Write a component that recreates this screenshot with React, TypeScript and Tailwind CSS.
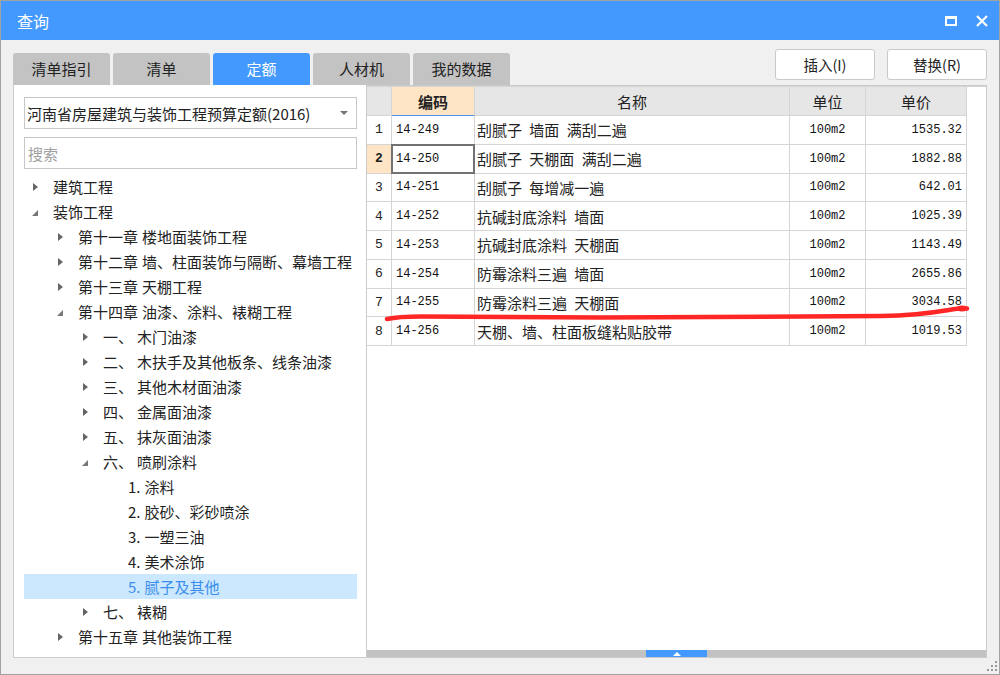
import React from "react"

type Node = { lv: number; arrow?: "r" | "d"; a: string; b?: string; sel?: boolean }

const tree: Node[] = [
  { lv: 0, arrow: "r", a: "建筑工程" },
  { lv: 0, arrow: "d", a: "装饰工程" },
  { lv: 1, arrow: "r", a: "第十一章", b: "楼地面装饰工程" },
  { lv: 1, arrow: "r", a: "第十二章", b: "墙、柱面装饰与隔断、幕墙工程" },
  { lv: 1, arrow: "r", a: "第十三章", b: "天棚工程" },
  { lv: 1, arrow: "d", a: "第十四章", b: "油漆、涂料、裱糊工程" },
  { lv: 2, arrow: "r", a: "一、", b: "木门油漆" },
  { lv: 2, arrow: "r", a: "二、", b: "木扶手及其他板条、线条油漆" },
  { lv: 2, arrow: "r", a: "三、", b: "其他木材面油漆" },
  { lv: 2, arrow: "r", a: "四、", b: "金属面油漆" },
  { lv: 2, arrow: "r", a: "五、", b: "抹灰面油漆" },
  { lv: 2, arrow: "d", a: "六、", b: "喷刷涂料" },
  { lv: 3, a: "1.", b: "涂料" },
  { lv: 3, a: "2.", b: "胶砂、彩砂喷涂" },
  { lv: 3, a: "3.", b: "一塑三油" },
  { lv: 3, a: "4.", b: "美术涂饰" },
  { lv: 3, a: "5.", b: "腻子及其他", sel: true },
  { lv: 2, arrow: "r", a: "七、", b: "裱糊" },
  { lv: 1, arrow: "r", a: "第十五章", b: "其他装饰工程" },
]

const rows = [
  ["14-249", "刮腻子 墙面 满刮二遍", "1535.32"],
  ["14-250", "刮腻子 天棚面 满刮二遍", "1882.88"],
  ["14-251", "刮腻子 每增减一遍", "642.01"],
  ["14-252", "抗碱封底涂料 墙面", "1025.39"],
  ["14-253", "抗碱封底涂料 天棚面", "1143.49"],
  ["14-254", "防霉涂料三遍 墙面", "2655.86"],
  ["14-255", "防霉涂料三遍 天棚面", "3034.58"],
  ["14-256", "天棚、墙、柱面板缝粘贴胶带", "1019.53"],
]

const tabs = ["清单指引", "清单", "定额", "人材机", "我的数据"]

const indent = ["pl-[4px]", "pl-[29px]", "pl-[54px]", "pl-[79px]"]

function Arrow({ kind }: { kind?: "r" | "d" }) {
  if (kind === "r")
    return <span className="block w-0 h-0 border-y-[4px] border-y-transparent border-l-[5px] border-l-[#666]" />
  if (kind === "d")
    return (
      <svg width="6" height="6" viewBox="0 0 6 6" className="mt-[2px]">
        <polygon points="6,0 6,6 0,6" fill="#777" />
      </svg>
    )
  return null
}

function TreeRow({ n }: { n: Node }) {
  return (
    <div
      className={`h-[25px] flex items-center leading-none text-[15px] ${indent[n.lv]} ${
        n.sel ? "bg-[#cce8ff] text-[#3b8eea]" : "text-[#222]"
      }`}
    >
      <span className="w-[14px] flex justify-center items-center">
        <Arrow kind={n.arrow} />
      </span>
      <span className="ml-[11px]">{n.a}</span>
      {n.b && <span className="ml-[4px]">{n.b}</span>}
    </div>
  )
}

const cell = "border-r border-b border-[#d5d5d5] flex items-center leading-none"

export default function App() {
  return (
    <div className="relative w-[1000px] h-[675px] overflow-hidden bg-[#f0f0f0] border border-[#a3a3a3] flex flex-col font-['Noto_Sans_CJK_SC','Microsoft_YaHei',sans-serif] text-[#222]">
      {/* title bar */}
      <div className="h-[39px] shrink-0 bg-[#4499ff] flex items-center pl-[16px] pr-[11px] text-white text-[16px]">
        <span>查询</span>
        <div className="ml-auto flex items-center gap-[19px]">
          <span className="block w-[12px] h-[10px] border-x-[2px] border-b-[2px] border-t-[3px] border-white" />
          <svg width="12" height="12" viewBox="0 0 12 12">
            <path d="M1 1 L11 11 M11 1 L1 11" stroke="#fff" strokeWidth="2.2" />
          </svg>
        </div>
      </div>

      <div className="flex-1 flex flex-col px-[12px]">
        {/* tabs and buttons */}
        <div className="h-[45px] shrink-0 flex justify-between">
          <div className="self-end flex gap-[3px]">
            {tabs.map((t) => (
              <div
                key={t}
                className={`w-[97px] h-[32px] rounded-t-[3px] flex items-center justify-center text-[15px] ${
                  t === "定额" ? "bg-[#4499ff] text-white" : "bg-[#c3c3c3] text-[#222]"
                }`}
              >
                {t}
              </div>
            ))}
          </div>
          <div className="mt-[9px] flex gap-[12px]">
            <button className="w-[100px] h-[31px] bg-white border border-[#c9c9c9] rounded-[3px] text-[14.5px] text-[#222]">
              插入(I)
            </button>
            <button className="w-[100px] h-[31px] bg-white border border-[#c9c9c9] rounded-[3px] text-[14.5px] text-[#222]">
              替换(R)
            </button>
          </div>
        </div>

        {/* main */}
        <div className="h-[573px] shrink-0 flex">
          <div className="w-[353px] bg-white border-l border-b border-[#cbcbcb] pl-[10px] pr-[9px] pt-[12px] flex flex-col">
            <div className="h-[32px] border border-[#c7c7c7] flex items-center pl-[2px] pr-[8px] text-[15px] leading-none">
              <span>河南省房屋建筑与装饰工程预算定额(2016)</span>
              <span className="ml-auto block w-0 h-0 border-x-[4px] border-x-transparent border-t-[4px] border-t-[#777]" />
            </div>
            <div className="mt-[8px] h-[32px] border border-[#c7c7c7] flex items-center pl-[3px] text-[15px] leading-none text-[#a0a0a0]">
              搜索
            </div>
            <div className="mt-[5px]">
              {tree.map((n, i) => (
                <TreeRow key={i} n={n} />
              ))}
            </div>
          </div>

          <div className="flex-1 bg-white border border-[#cbcbcb] flex flex-col">
            <div className="grid grid-cols-[25px_83px_315px_76px_101px] border-t border-[#d5d5d5] text-[15px]">
              <div className={`${cell} h-[29px] bg-[#e6e6e6]`} />
              <div className={`${cell} h-[29px] bg-[#fde5c6] border-b-[#4a94f0] justify-center font-bold`}>编码</div>
              <div className={`${cell} h-[29px] bg-[#e6e6e6] justify-center`}>名称</div>
              <div className={`${cell} h-[29px] bg-[#e6e6e6] justify-center`}>单位</div>
              <div className={`${cell} h-[29px] bg-[#e6e6e6] justify-center`}>单价</div>
              {rows.map((r, i) => {
                const sel = i === 1
                return (
                  <React.Fragment key={r[0]}>
                    <div
                      className={`${cell} h-[28.75px] justify-center font-['Liberation_Mono',monospace] text-[13px] ${
                        sel ? "bg-[#fde5c6] font-bold border-r-[#4a94f0]" : ""
                      }`}
                    >
                      {i + 1}
                    </div>
                    <div className={`${cell} relative h-[28.75px] pl-[4px] font-['Liberation_Mono',monospace] text-[12px] text-[#111]`}>
                      {r[0]}
                      {sel && <span className="absolute -top-px -left-px right-[-1px] bottom-[-1px] border-2 border-[#727272]" />}
                    </div>
                    <div className={`${cell} h-[28.75px] pl-[2px] text-[15px] [word-spacing:4px]`}>{r[1]}</div>
                    <div className={`${cell} h-[28.75px] justify-center font-['Liberation_Mono',monospace] text-[12px] text-[#111]`}>
                      100m2
                    </div>
                    <div className={`${cell} h-[28.75px] justify-end pr-[4px] font-['Liberation_Mono',monospace] text-[12px] text-[#111]`}>
                      {r[2]}
                    </div>
                  </React.Fragment>
                )
              })}
            </div>
            <div className="mt-auto h-[7px] bg-[#c2c2c2] flex justify-center">
              <div className="w-[61px] h-full bg-[#4499ff] flex items-center justify-center">
                <span className="block w-0 h-0 border-x-[4px] border-x-transparent border-b-[4px] border-b-white" />
              </div>
            </div>
          </div>
        </div>
      </div>

      {/* resize grip */}
      <div className="absolute right-[2px] bottom-[3px] grid grid-cols-3 gap-[2px]">
        <span className="w-[2px] h-[2px]" />
        <span className="w-[2px] h-[2px]" />
        <span className="w-[2px] h-[2px] bg-[#9a9a9a]" />
        <span className="w-[2px] h-[2px]" />
        <span className="w-[2px] h-[2px] bg-[#9a9a9a]" />
        <span className="w-[2px] h-[2px] bg-[#9a9a9a]" />
        <span className="w-[2px] h-[2px] bg-[#9a9a9a]" />
        <span className="w-[2px] h-[2px] bg-[#9a9a9a]" />
        <span className="w-[2px] h-[2px] bg-[#9a9a9a]" />
      </div>

      {/* red hand-drawn underline */}
      <svg className="absolute left-0 top-0 pointer-events-none" width="1000" height="675">
        <path
          d="M386 318 C 395 316, 405 315.5, 420 315.5 L 600 316.5 L 880 315 C 910 314.5, 930 312, 948 309 C 956 307.5, 962 307, 966 307.5"
          fill="none"
          stroke="#ff2626"
          strokeWidth="4.5"
          strokeLinecap="round"
        />
        <ellipse cx="961" cy="307.5" rx="6" ry="3" fill="#ff2626" />
      </svg>
    </div>
  )
}
